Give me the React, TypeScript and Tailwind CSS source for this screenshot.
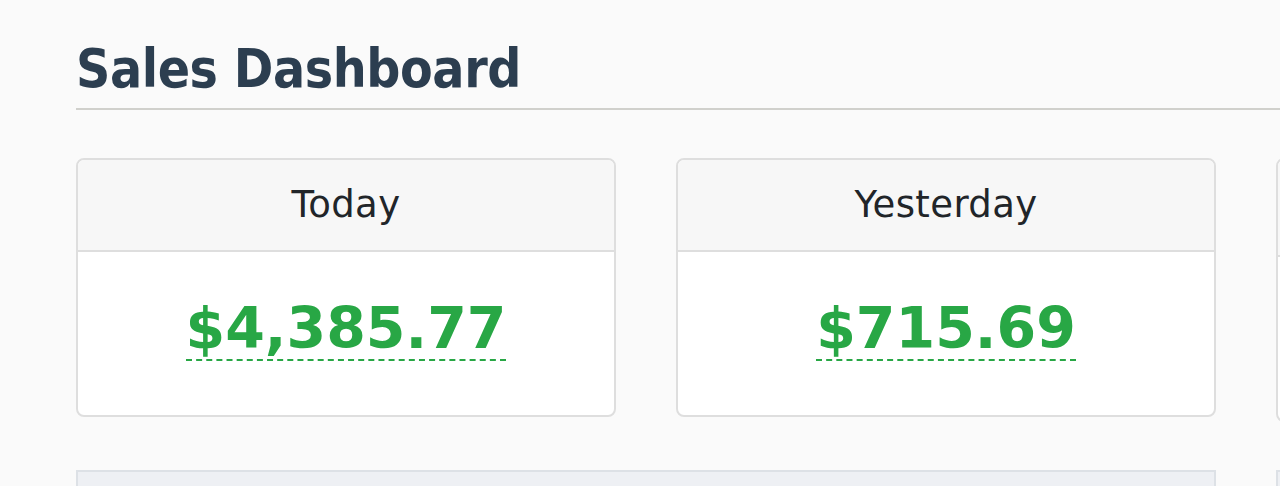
const cards = [
  { label: "Today", amount: "$4,385.77" },
  { label: "Yesterday", amount: "$715.69" },
  { label: "This Week", amount: "$12,904.31" },
];

const StatCard = ({ label, amount, tall }: { label: string; amount: string; tall?: boolean }) => (
  <div className="rounded-[8px] border-2 border-[#dedede] bg-white overflow-hidden">
    <div
      className={`flex items-center justify-center bg-[#f7f7f7] border-b-2 border-[#dedede] ${
        tall ? "h-[97px]" : "h-[92px]"
      }`}
    >
      <span className="text-[37px] tracking-[0.4px] text-[#212529]">{label}</span>
    </div>
    <div className="h-[163px] pb-[10px] flex items-center justify-center">
      <span
        title={label}
        className="text-[57px] font-bold text-[#28a745] leading-[62px] border-b-2 border-dashed border-[#28a745]"
      >
        {amount}
      </span>
    </div>
  </div>
);

export default function App() {
  return (
    <div className="h-screen bg-[#fafafa] pl-[76px] overflow-hidden font-['DejaVu_Sans',Verdana,sans-serif]">
      <h1 className="w-[1300px] pt-[41px] pb-[11px] text-[53px] leading-[56px] tracking-[-0.4px] font-bold font-stretch-condensed font-['DejaVu_Sans_Condensed','DejaVu_Sans',sans-serif] text-[#2c3e50] border-b-2 border-[#d0d0cc]">
        Sales Dashboard
      </h1>

      <div className="mt-[48px] grid grid-cols-[540px_540px_540px] gap-x-[60px] gap-y-[48px] items-start w-max">
        {cards.map((c, i) => (
          <StatCard key={c.label} label={c.label} amount={c.amount} tall={i === 2} />
        ))}
        <div className="col-span-2 h-[200px] bg-[#eef0f4] border-2 border-[#dde1e6]" />
        <div className="h-[200px] bg-[#eef0f4] border-2 border-[#dde1e6]" />
      </div>
    </div>
  );
}
